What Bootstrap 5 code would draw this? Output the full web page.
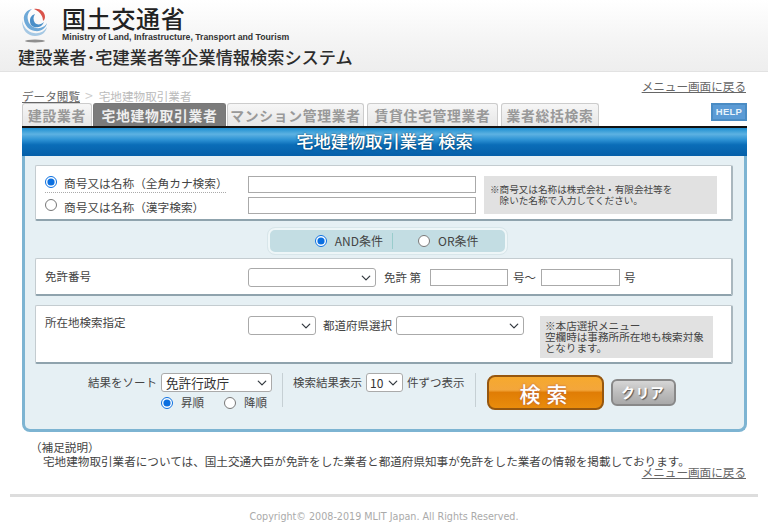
<!DOCTYPE html>
<html lang="ja">
<head>
<meta charset="utf-8">
<title>宅地建物取引業者 検索</title>
<link href="https://cdn.jsdelivr.net/npm/bootstrap@5.3.0/dist/css/bootstrap.min.css" rel="stylesheet">
<style>
html,body{height:532px;overflow:hidden}
body{font-family:"Noto Sans CJK JP","Liberation Sans",sans-serif;font-size:11.5px;color:#444;background:#fff;line-height:1.2}
.site-head{height:72px;background:linear-gradient(#fff,#f4f4f4 60%,#eee);border-bottom:1px solid #e2e2e2;padding:7px 0 0 18px}
.logo-line{height:36px;gap:10px;padding-left:2px}
.ministry-jp{font-size:24px;font-weight:500;color:#222;line-height:24px;letter-spacing:.7px;margin-top:-1px}
.ministry-en{font:bold 8.7px/9px "Liberation Sans",sans-serif;color:#333;margin-top:3px;white-space:nowrap}
.sys-title{font-size:17.200px;line-height:23px;color:#2c2c2c;font-weight:500;white-space:nowrap;margin-top:2px}
.top-row{margin:14px 22px 0;height:17px}
.crumbs{font-size:11.600px;color:#bbb;padding-top:1px}
.crumb-sep{font-size:14px;margin:0 5px;color:#ccc}
.crumb-now{margin-left:1px}
.crumbs a,.back-link{color:#666;text-decoration:underline}
.back-link{font-size:11.600px}
.link-up{margin-top:-6px}
.tab-row{margin:0 21px 0 22px;height:23px;gap:1px}
.tabx{display:block;height:23px;background:linear-gradient(#f6f6f6,#e6e6e6);border:1px solid #ccc;border-bottom:0;border-radius:3px 3px 0 0;color:#999;font-size:13.800px;font-weight:700;line-height:22px;text-align:center;letter-spacing:.7px;text-decoration:none;white-space:nowrap}
.tabx.on{background:#7b7b7b;color:#eee;border-color:#777}
.tab-a{width:70px}.tab-b{width:133px}.tab-c{width:137px;margin-right:2px}.tab-d{width:131px;margin-right:2px}.tab-e{width:98px}
.help-btn{width:36px;height:18px;background:#5b9bd5;border:2px solid #4a8cc4;color:#e8f2fa;font:bold 9.5px/14px "Liberation Sans",sans-serif;text-align:center;letter-spacing:.3px}
.panel{margin:0 21px 0 22px;height:306px;background:#e6f0f4;border:solid #7db4d2;border-width:0 3px 3px;border-radius:0 0 8px 8px}
.panel-title{margin:0 -3px;height:30px;border-top:2px solid #111;background:linear-gradient(#1c8ed0,#5db2e2 22%,#2d92d4 42%,#0a6db8 60%,#055fa8);color:#fff;font-size:17.300px;font-weight:500;text-align:center;line-height:26px;text-shadow:0 0 2px #035}
.fbox{margin:0 11px 0 10px;background:#fff;border:1px solid #c4ccd0;border-bottom:2px solid #8fa3ad;border-right:2px solid #a9b7be;border-radius:2px}
.box-a{height:56px;margin-top:9px;padding:9px 15px 0 9px}
.box-b{height:38px;margin-top:4px;padding:9px 0 0 9px}
.box-c{height:59px;margin-top:9px;padding:10px 0 0 9px}
.lbl-col{width:203px;flex:none}
.lbl-low{padding-top:2px}
.radio-line{gap:7px;color:#444;font-size:11.700px}
.radio-line input,.sort-radio input,.pill input{width:12px;height:12px;margin:0;accent-color:#0a6fe0;flex:none}
.radio-line.radio-first input{margin-top:-3px}
.radio-line.radio-second input{margin-top:-5px}
.radio-first{height:18px;border-bottom:1px dotted #aaa;width:181px}
.radio-second{height:22px;padding-top:6px}
.txt-in{height:17px;padding:0 3px;border-radius:0;border:1px solid #aaa;font-size:12px;min-height:0}
.in-wide{width:228px}
.in-num{width:78px}
.in-num2{width:79px}
.stack-in{gap:4px;padding-top:1px}
.note{background:#e1e1e1;color:#444;flex:none}
.note-a{width:233px;height:38px;margin:1px 0 0 8px;padding:8px 6px 0;font-size:9.6px;line-height:10.500px}
.note-c{width:173px;height:42px;margin-left:16px;padding:4px 5px 0;line-height:11px;font-size:10.600px}
.pill{width:239px;height:26px;margin:7px 0 0 243px;background:#c3dde3;border:2px solid #eef6f8;border-radius:7px;outline:1px solid #d8e6ea;font-size:12px}
.pill-half{height:16px;gap:8px}
.pill-left{width:123px;justify-content:flex-end;padding-right:9px;border-right:1px solid #9cc}
.pill-right{padding-left:25px}
.sel{height:19px;min-height:0;padding:0 18px 0 3px;font-size:12px;border:1px solid #aaa;border-radius:3px;background-position:right 4px center;background-size:10px 10px;color:#333;line-height:17px}
.sel-lic{width:128px}
.sel-pre{width:68px}
.sel-pref{width:128px}
.sel-sort{width:111px;font-size:12.600px;padding-left:4px}
.sel-cnt{width:37px}
.ml-8{margin-left:8px}.ml-9{margin-left:9px}.ml-5{margin-left:5px}.ml-4{margin-left:4px}.ml-7{margin-left:7px}
.bottom-row{margin-top:9px;padding-left:63px}
.sort-col{width:194px;flex:none;font-size:11.5px}
.sort-radio{gap:8px;margin-top:4px;padding-left:73px}
.sort-radio input.sort-gap{margin-left:12px}
.vbar{width:1px;height:34px;background:#c6d0d4;flex:none}
.cnt-col{gap:4px;padding:0 10px;height:19px}
.search-btn{width:117px;height:35px;margin:2px 0 0 11px;padding:0 0 0 3px;background:linear-gradient(#f6a92e,#f3a63b 42%,#e07d05 50%,#e98c0c);border:2px solid #96570f;border-radius:8px;color:#fff;font-size:21px;font-weight:500;letter-spacing:6px;line-height:28px;text-shadow:0 0 2px #a55}
.clear-btn{width:65px;height:27px;margin:6px 0 0 7px;padding:0;background:linear-gradient(#d6d6d6,#bdbdbd 50%,#a9a9a9);border:2px solid #888;border-radius:6px;color:#fff;font-size:13.5px;font-weight:700;line-height:21px;text-shadow:1px 1px 1px #555;letter-spacing:1px}
.foot-note{margin:8px 22px 0 30px;font-size:11.600px;color:#444;line-height:14px}
.foot-indent{padding-left:13px;white-space:nowrap}
.foot-link{margin:-3px 22px 0 0;text-align:right;line-height:14px}
.rule{margin:15px 10px 0;height:3px;background:#ddd}
.copy{font:9.6px/14px "DejaVu Sans",sans-serif;color:#aaa;text-align:center;margin-top:13px}
</style>
</head>
<body>
<header class="site-head">
  <div class="d-flex logo-line">
    <svg width="32" height="36" viewBox="0 0 32 36" aria-hidden="true">
      <path d="M2 13C2 24 8 29 15 29C22 29 26 25 27 20C24 25 19 27 14 26C7 25 3 19 2 13z" fill="#a5c8e4"/>
      <path d="M4 13C3 7 7 3 12 2C8 5 7 9 8 13C9 18 14 22 20 21C24 20 26 18 27 16C26 21 21 25 15 24C9 23 5 19 4 13z" fill="#6ea9d8"/>
      <path d="M10 14C10 10 12 8 15 7C13 10 13 13 15 16C17 18 21 18 24 15C22 20 17 21 14 20C11 19 10 17 10 14z" fill="#4a8fc8"/>
      <path d="M14 2C19 1 25 4 25 10C25 12 24 13 23 14C23 10 21 5 14 2z" fill="#d9534a"/>
      <ellipse cx="15" cy="34" rx="10" ry="1.500" fill="#8f8f8f"/>
    </svg>
    <div>
      <div class="ministry-jp">国土交通省</div>
      <div class="ministry-en">Ministry of Land, Infrastructure, Transport and Tourism</div>
    </div>
  </div>
  <div class="sys-title">建設業者･宅建業者等企業情報検索システム</div>
</header>

<div class="d-flex justify-content-between top-row">
  <div class="crumbs"><a href="#">データ閲覧</a><span class="crumb-sep">&gt;</span><span class="crumb-now">宅地建物取引業者</span></div>
  <a class="back-link link-up" href="#">メニュー画面に戻る</a>
</div>

<div class="d-flex tab-row">
  <a class="tabx tab-a" href="#">建設業者</a>
  <a class="tabx tab-b on" href="#">宅地建物取引業者</a>
  <a class="tabx tab-c" href="#">マンション管理業者</a>
  <a class="tabx tab-d" href="#">賃貸住宅管理業者</a>
  <a class="tabx tab-e" href="#">業者総括検索</a>
  <div class="help-btn ms-auto">HELP</div>
</div>

<main class="panel">
  <div class="panel-title">宅地建物取引業者 検索</div>

  <section class="fbox box-a d-flex">
    <div class="lbl-col">
      <label class="d-flex align-items-center radio-line radio-first"><input type="radio" name="nm" checked>商号又は名称（全角カナ検索）</label>
      <label class="d-flex align-items-center radio-line radio-second"><input type="radio" name="nm">商号又は名称（漢字検索）</label>
    </div>
    <div class="d-flex flex-column stack-in">
      <input class="form-control txt-in in-wide" type="text">
      <input class="form-control txt-in in-wide" type="text">
    </div>
    <div class="note note-a">※商号又は名称は株式会社・有限会社等を<br>　除いた名称で入力してください。</div>
  </section>

  <div class="pill d-flex align-items-center">
    <label class="d-flex align-items-center pill-half pill-left"><input type="radio" name="cond" checked>AND条件</label>
    <label class="d-flex align-items-center pill-half pill-right"><input type="radio" name="cond">OR条件</label>
  </div>

  <section class="fbox box-b d-flex">
    <div class="lbl-col lbl-low">免許番号</div>
    <div class="d-flex align-items-center align-self-start">
      <select class="form-select sel sel-lic"><option></option></select>
      <span class="ml-8">免許 第</span>
      <input class="form-control txt-in in-num ml-9" type="text">
      <span class="ml-5">号～</span>
      <input class="form-control txt-in in-num2 ml-5" type="text">
      <span class="ml-4">号</span>
    </div>
  </section>

  <section class="fbox box-c d-flex">
    <div class="lbl-col">所在地検索指定</div>
    <div class="d-flex align-items-center align-self-start">
      <select class="form-select sel sel-pre"><option></option></select>
      <span class="ml-7">都道府県選択</span>
      <select class="form-select sel sel-pref ml-4"><option></option></select>
    </div>
    <div class="note note-c">※本店選択メニュー<br>空欄時は事務所所在地も検索対象<br>となります。</div>
  </section>

  <section class="d-flex align-items-start bottom-row">
    <div class="sort-col">
      <div class="d-flex align-items-center gap-1">結果をソート
        <select class="form-select sel sel-sort"><option>免許行政庁</option></select>
      </div>
      <div class="d-flex align-items-center sort-radio">
        <input type="radio" name="ord" checked><span>昇順</span>
        <input class="sort-gap" type="radio" name="ord"><span>降順</span>
      </div>
    </div>
    <div class="vbar"></div>
    <div class="d-flex align-items-center cnt-col">検索結果表示
      <select class="form-select sel sel-cnt"><option>10</option></select>
      件ずつ表示
    </div>
    <div class="vbar"></div>
    <button class="btn search-btn" type="button">検索</button>
    <button class="btn clear-btn" type="button">クリア</button>
  </section>
</main>

<div class="foot-note">
  （補足説明）
  <div class="foot-indent">宅地建物取引業者については、国土交通大臣が免許をした業者と都道府県知事が免許をした業者の情報を掲載しております。</div>
</div>
<div class="foot-link"><a class="back-link" href="#">メニュー画面に戻る</a></div>
<div class="rule"></div>
<div class="copy">Copyright© 2008-2019 MLIT Japan. All Rights Reserved.</div>
<script src="https://cdn.jsdelivr.net/npm/bootstrap@5.3.0/dist/js/bootstrap.bundle.min.js"></script>
</body>
</html>
